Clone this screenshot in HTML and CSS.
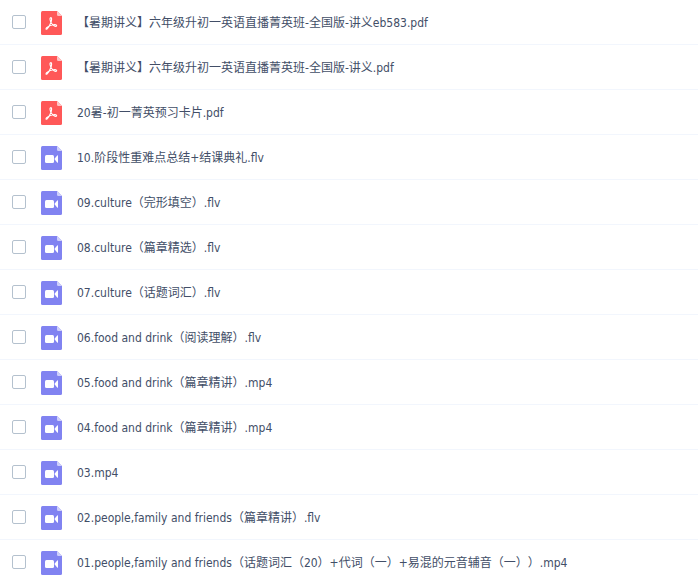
FILE: index.html
```html
<!DOCTYPE html>
<html lang="zh-CN">
<head>
    <meta charset="UTF-8">
    <meta name="viewport" content="width=device-width, initial-scale=1.0">
    <title>文件列表</title>
    <link rel="stylesheet" href="styles.css">
</head>
<body>
    <!-- Shared file type icons -->
    <svg class="icon-defs" aria-hidden="true">
        <symbol id="icon-pdf" viewBox="0 0 21 24">
            <path fill="#ff5858" d="M1.500 0H16L21 5V22.500Q21 24 19.500 24H1.500Q0 24 0 22.500V1.500Q0 0 1.500 0Z"/>
            <path fill="#ffc4c4" d="M16 0L21 5H17.200Q16 5 16 3.800Z"/>
            <path fill="none" stroke="#fff" stroke-width="1.100" stroke-linecap="round" stroke-linejoin="round" d="M9.600 6.700C11.200 6.300 10.600 9.800 9.800 11.800C8.800 14.300 7.300 17 6 18C5 18.800 4.600 17.600 5.600 16.700C7.300 15.200 10.600 13.800 13.600 13.500C15.900 13.500 16.200 15.200 14.800 15.400C13 15.500 10.400 12.800 9.600 10.600C9 9 8.700 7.100 9.600 6.700Z"/>
        </symbol>
        <symbol id="icon-video" viewBox="0 0 21 24">
            <path fill="#8183f1" d="M1.500 0H16L21 5V22.500Q21 24 19.500 24H1.500Q0 24 0 22.500V1.500Q0 0 1.500 0Z"/>
            <path fill="#cfd0fb" d="M16 0L21 5H17.200Q16 5 16 3.800Z"/>
            <rect fill="#fff" x="4" y="9" width="9" height="8" rx="1.500"/>
            <path fill="#fff" d="M13.300 13L16.200 9.400Q17 8.800 17 9.800V16.200Q17 17.200 16.200 16.600Z"/>
        </symbol>
    </svg>

    <ul class="file-list">
        <li class="file-row">
            <input class="file-check" type="checkbox" id="file-1">
            <svg class="file-icon" aria-hidden="true"><use href="#icon-pdf"/></svg>
            <label class="file-name" for="file-1">【暑期讲义】六年级升初一英语直播菁英班-全国版-讲义eb583.pdf</label>
        </li>
        <li class="file-row">
            <input class="file-check" type="checkbox" id="file-2">
            <svg class="file-icon" aria-hidden="true"><use href="#icon-pdf"/></svg>
            <label class="file-name" for="file-2">【暑期讲义】六年级升初一英语直播菁英班-全国版-讲义.pdf</label>
        </li>
        <li class="file-row">
            <input class="file-check" type="checkbox" id="file-3">
            <svg class="file-icon" aria-hidden="true"><use href="#icon-pdf"/></svg>
            <label class="file-name" for="file-3">20暑-初一菁英预习卡片.pdf</label>
        </li>
        <li class="file-row">
            <input class="file-check" type="checkbox" id="file-4">
            <svg class="file-icon" aria-hidden="true"><use href="#icon-video"/></svg>
            <label class="file-name" for="file-4">10.阶段性重难点总结+结课典礼.flv</label>
        </li>
        <li class="file-row">
            <input class="file-check" type="checkbox" id="file-5">
            <svg class="file-icon" aria-hidden="true"><use href="#icon-video"/></svg>
            <label class="file-name" for="file-5">09.culture（完形填空）.flv</label>
        </li>
        <li class="file-row">
            <input class="file-check" type="checkbox" id="file-6">
            <svg class="file-icon" aria-hidden="true"><use href="#icon-video"/></svg>
            <label class="file-name" for="file-6">08.culture（篇章精选）.flv</label>
        </li>
        <li class="file-row">
            <input class="file-check" type="checkbox" id="file-7">
            <svg class="file-icon" aria-hidden="true"><use href="#icon-video"/></svg>
            <label class="file-name" for="file-7">07.culture（话题词汇）.flv</label>
        </li>
        <li class="file-row">
            <input class="file-check" type="checkbox" id="file-8">
            <svg class="file-icon" aria-hidden="true"><use href="#icon-video"/></svg>
            <label class="file-name" for="file-8">06.food and drink（阅读理解）.flv</label>
        </li>
        <li class="file-row">
            <input class="file-check" type="checkbox" id="file-9">
            <svg class="file-icon" aria-hidden="true"><use href="#icon-video"/></svg>
            <label class="file-name" for="file-9">05.food and drink（篇章精讲）.mp4</label>
        </li>
        <li class="file-row">
            <input class="file-check" type="checkbox" id="file-10">
            <svg class="file-icon" aria-hidden="true"><use href="#icon-video"/></svg>
            <label class="file-name" for="file-10">04.food and drink（篇章精讲）.mp4</label>
        </li>
        <li class="file-row">
            <input class="file-check" type="checkbox" id="file-11">
            <svg class="file-icon" aria-hidden="true"><use href="#icon-video"/></svg>
            <label class="file-name" for="file-11">03.mp4</label>
        </li>
        <li class="file-row">
            <input class="file-check" type="checkbox" id="file-12">
            <svg class="file-icon" aria-hidden="true"><use href="#icon-video"/></svg>
            <label class="file-name" for="file-12">02.people,family and friends（篇章精讲）.flv</label>
        </li>
        <li class="file-row">
            <input class="file-check" type="checkbox" id="file-13">
            <svg class="file-icon" aria-hidden="true"><use href="#icon-video"/></svg>
            <label class="file-name" for="file-13">01.people,family and friends（话题词汇（20）+代词（一）+易混的元音辅音（一））.mp4</label>
        </li>
    </ul>
</body>
</html>
```
FILE: styles.css
```css
body {
    margin: 0;
    font-family: "DejaVu Sans Condensed", "Noto Sans CJK SC", sans-serif;
    font-size: 12px;
    line-height: 18px;
    text-spacing-trim: space-all;
    color: #424e67;
    background-color: #fff;
}
.icon-defs {
    display: none;
}
.file-list {
    list-style: none;
    margin: 0;
    padding: 0;
}
.file-row {
    display: flex;
    align-items: center;
    padding: 11px 12px 9px;
    border-bottom: 1px solid #f2f6fd;
}
.file-row:last-child {
    border-bottom: none;
}
.file-check {
    appearance: none;
    box-sizing: border-box;
    flex: none;
    width: 14px;
    height: 14px;
    margin: 0 15px 2px 0;
    border: 1px solid #b4c1ce;
    border-radius: 2px;
    background-color: #fff;
    cursor: pointer;
}
.file-check:checked {
    background-color: #3b8cff;
    border-color: #3b8cff;
}
.file-icon {
    flex: none;
    width: 21px;
    height: 24px;
    margin-right: 15px;
}
.file-name {
    white-space: nowrap;
    cursor: pointer;
}
```
